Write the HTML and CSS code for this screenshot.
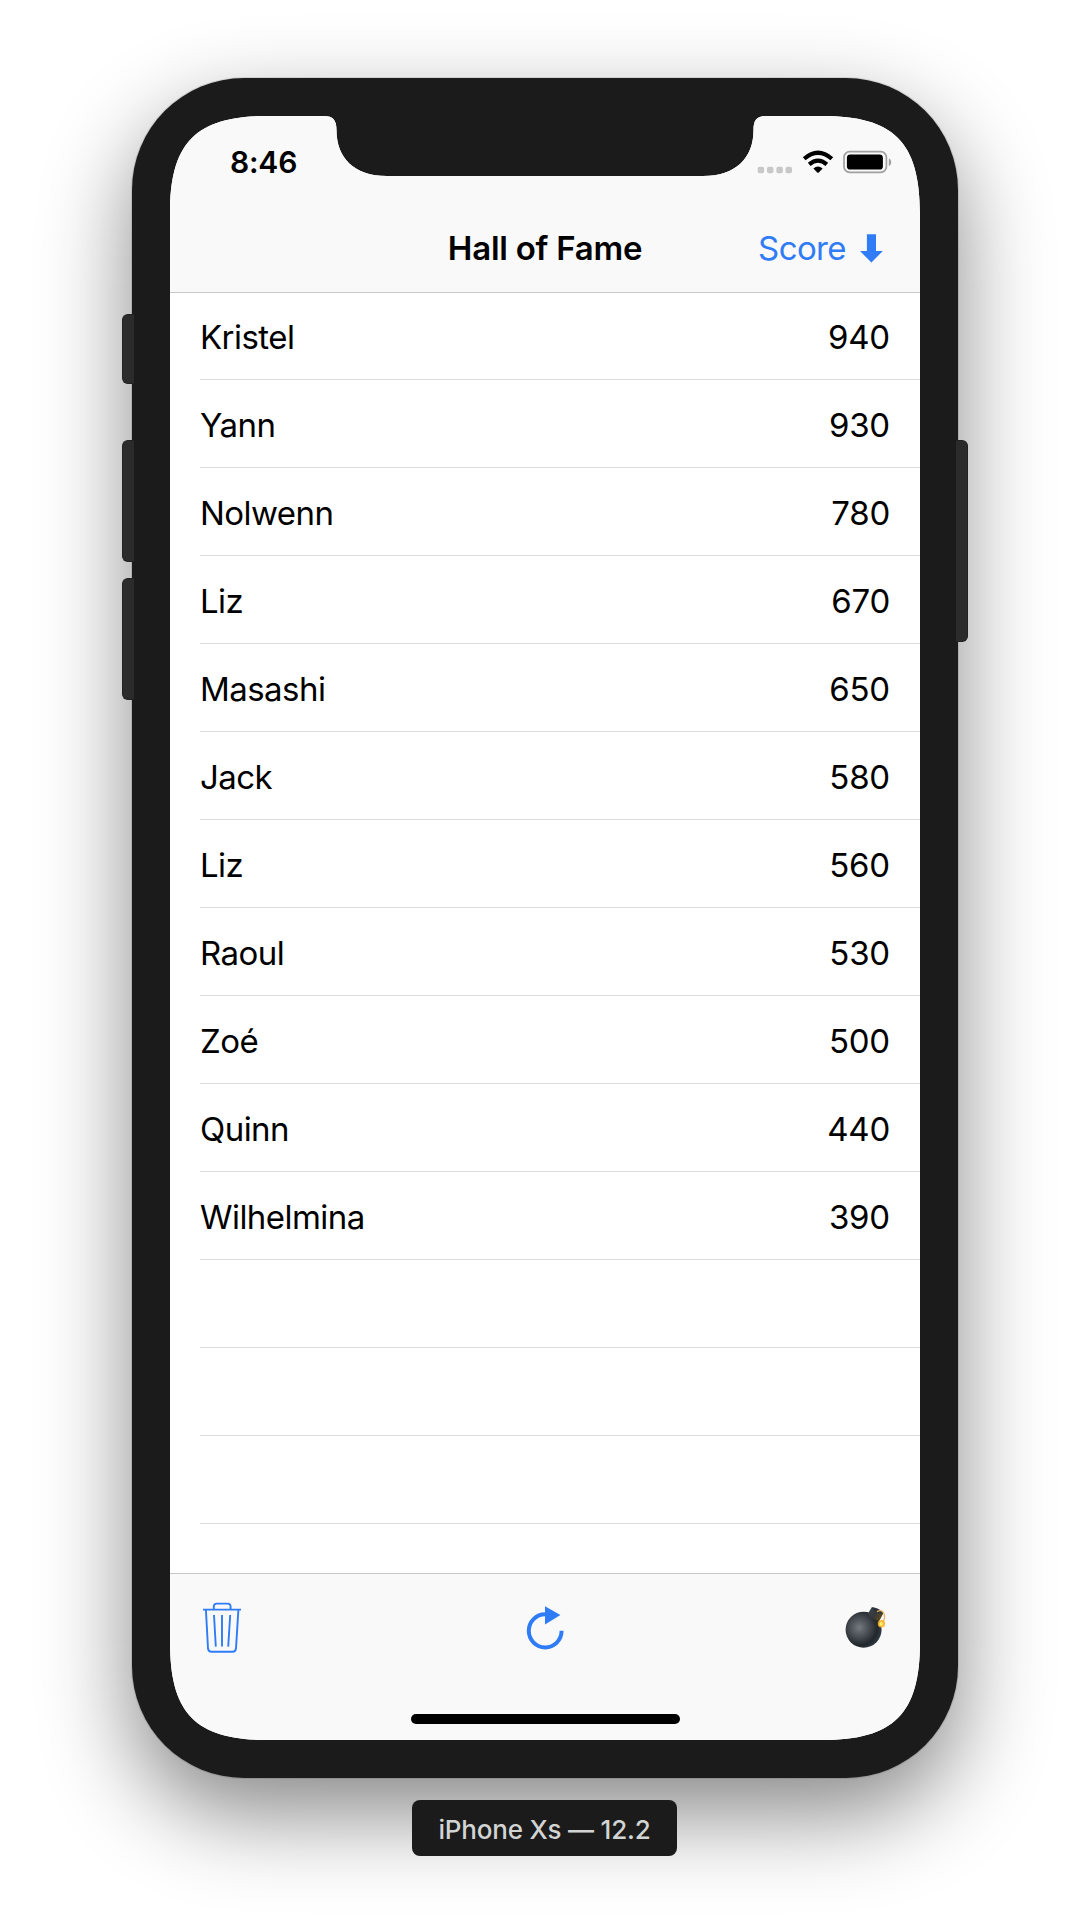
FILE: index.html
```
<!DOCTYPE html>
<html lang="en">
<head>
<meta charset="utf-8">
<title>Hall of Fame</title>
<link rel="stylesheet" href="styles.css">
</head>
<body>
<main class="device">
  <span class="side-button silent"></span>
  <span class="side-button volume-up"></span>
  <span class="side-button volume-down"></span>
  <span class="side-button power"></span>
  <div class="screen">
    <header class="header">
      <div class="status-bar">
        <span class="time">8:46</span>
        <div class="status-icons">
          <svg class="signal" width="36" height="8" viewBox="0 0 36 8" fill="#c8c8c8">
            <rect x="0.7" y="0.7" width="6.4" height="6.6" rx="1.8"/>
            <rect x="10" y="0.7" width="6.4" height="6.6" rx="1.8"/>
            <rect x="19.4" y="0.7" width="6.4" height="6.6" rx="1.8"/>
            <rect x="28.6" y="0.7" width="6.4" height="6.6" rx="1.8"/>
          </svg>
          <svg class="wifi" width="32" height="24" viewBox="0 0 32 24" fill="none" stroke="#000" stroke-width="4.2">
            <path d="M2.2 8.8 Q16 -3.4 29.8 8.8"/>
            <path d="M7.2 14.4 Q16 6.8 24.8 14.4"/>
            <path d="M11.4 18.6 Q16 14.4 20.6 18.6 L16.8 22.4 Q16 23 15.2 22.4 Z" fill="#000" stroke="none"/>
          </svg>
          <svg class="battery" width="49" height="24" viewBox="0 0 49 24">
            <rect x="1" y="1.7" width="42.4" height="20.6" rx="5.6" fill="none" stroke="#a0a0a0" stroke-width="1.7"/>
            <rect x="3.9" y="4.4" width="36" height="15.2" rx="3.4"/>
            <path d="M45.8 8.4 C49 9.6 49 14.8 45.8 16 Z" fill="#a0a0a0"/>
          </svg>
        </div>
      </div>
      <div class="nav-bar">
        <h1 class="title">Hall of Fame</h1>
        <div class="sort"><span class="sort-label">Score</span>
          <svg width="23" height="29" viewBox="0 0 23 29"><path d="M6.9 0.3 H16 V17 H22.8 L11.4 28.6 L0 17 H6.9 Z" fill="#2f7cf6"/></svg>
        </div>
      </div>
    </header>
    <ul class="scores">
      <li class="row"><span>Kristel</span><span class="points">940</span></li>
      <li class="row"><span>Yann</span><span class="points">930</span></li>
      <li class="row"><span>Nolwenn</span><span class="points">780</span></li>
      <li class="row"><span>Liz</span><span class="points">670</span></li>
      <li class="row"><span>Masashi</span><span class="points">650</span></li>
      <li class="row"><span>Jack</span><span class="points">580</span></li>
      <li class="row"><span>Liz</span><span class="points">560</span></li>
      <li class="row"><span>Raoul</span><span class="points">530</span></li>
      <li class="row"><span>Zoé</span><span class="points">500</span></li>
      <li class="row"><span>Quinn</span><span class="points">440</span></li>
      <li class="row"><span>Wilhelmina</span><span class="points">390</span></li>
      <li class="row"></li>
      <li class="row"></li>
      <li class="row"></li>
    </ul>
    <footer class="footer">
      <div class="toolbar">
        <svg width="38" height="52" viewBox="0 0 38 52" fill="none" stroke="#2f7cf6" stroke-width="1.9">
          <path d="M0 7.6 H38 M10.8 7.6 V4.6 Q10.8 1.6 13.8 1.6 H24.6 Q27.6 1.6 27.6 4.6 V7.6"/>
          <path d="M2.9 7.6 L5 46.4 Q5.3 49.8 8.6 49.8 H29.4 Q32.7 49.8 33 46.4 L35.4 7.6"/>
          <path d="M11 13 L12.8 44.6 M19 13 V44.6 M27.2 13 L25.2 44.6"/>
        </svg>
        <svg width="38" height="46" viewBox="-0.4 0 38 46">
          <path d="M18.8 9.2 A16.4 16.6 0 1 0 35.2 25.8" fill="none" stroke="#2f7cf6" stroke-width="4"/>
          <path d="M18.6 1.2 L34 10 L18.6 19.4 Z" fill="#2f7cf6"/>
        </svg>
        <svg width="42" height="46" viewBox="0 0 42 46">
          <defs>
            <radialGradient id="shell" cx="0.38" cy="0.44" r="0.62">
              <stop offset="0" stop-color="#747a7f"/>
              <stop offset="0.4" stop-color="#4b5157"/>
              <stop offset="0.8" stop-color="#22272c"/>
              <stop offset="1" stop-color="#303942"/>
            </radialGradient>
            <linearGradient id="neck" x1="0" y1="0" x2="1" y2="0.6">
              <stop offset="0" stop-color="#39444e"/>
              <stop offset="0.6" stop-color="#37383a"/>
              <stop offset="1" stop-color="#5b4a1e"/>
            </linearGradient>
          </defs>
          <circle cx="18.6" cy="24.7" r="18" fill="url(#shell)"/>
          <path d="M22.6 9.2 L26.6 2.6 Q28 1.4 33 3.8 Q38 6.6 38.1 8.8 L34.4 15.8 Q29 15.6 22.6 9.2 Z" fill="url(#neck)"/>
          <path d="M26.6 2.6 Q32 2.4 38 8.6 Q31 8.4 26.6 2.6 Z" fill="#26313a"/>
          <path d="M32 6.6 Q38.2 3.6 39.4 10.2 Q40.2 14.6 37.2 18" fill="none" stroke="#e4b465" stroke-width="1.3"/>
          <circle cx="36.4" cy="18.8" r="3.7" fill="#ffae21" opacity="0.85"/>
          <circle cx="36" cy="19" r="1.9" fill="#fff06a"/>
        </svg>
      </div>
      <div class="home-indicator"></div>
    </footer>
  </div>
</main>
<div class="device-label">iPhone Xs — 12.2</div>
</body>
</html>
```
FILE: styles.css
```
* { box-sizing: border-box; }

body {
  margin: 0;
  padding-top: 78px;
  height: 1928px;
  display: flex;
  flex-direction: column;
  align-items: center;
  overflow: hidden;
  background: #fff;
  color: #000;
  font-family: Inter, "Liberation Sans", sans-serif;
}

.device {
  position: relative;
  flex: none;
  width: 826px;
  height: 1700px;
  padding: 38px;
  border-radius: 112px;
  background: #1b1b1b;
  box-shadow: 0 0 0 1px rgba(0, 0, 0, 0.1), 0 36px 90px rgba(0, 0, 0, 0.47);
}

.side-button {
  position: absolute;
  left: -10px;
  width: 12px;
  border: 1px solid #222;
  border-right: 0;
  border-radius: 6px 0 0 6px;
  background: #2b2b2b;
}
.silent { top: 236px; height: 70px; }
.volume-up { top: 362px; height: 122px; }
.volume-down { top: 500px; height: 122px; }
.power {
  left: auto;
  right: -10px;
  top: 362px;
  height: 202px;
  border: 1px solid #222;
  border-left: 0;
  border-radius: 0 6px 6px 0;
}

/* Rounded display with the sensor notch cut from its top edge */
.screen {
  display: flex;
  flex-direction: column;
  width: 750px;
  height: 1624px;
  background: #fff;
  clip-path: path("M0 98 C0 26 26 0 98 0 H154 C163 0 166.500 4 166.500 14 C166.500 42 184 60 217 60 H533 C566 60 583.500 42 583.500 14 C583.500 4 587 0 596 0 H652 C724 0 750 26 750 98 V1526 C750 1598 724 1624 652 1624 H98 C26 1624 0 1598 0 1526 Z");
}

.header {
  flex: none;
  height: 177px;
  border-bottom: 1px solid #c8c8c9;
  background: #f9f9f9;
}

.status-bar {
  display: flex;
  justify-content: space-between;
  height: 88px;
  padding: 34px 28px 0 60px;
}
.time {
  font-size: 30px;
  font-weight: 600;
  line-height: 24px;
  letter-spacing: -0.2px;
}
.status-icons { display: flex; align-items: flex-start; }
.signal { margin: 16px 9px 0 0; }
.wifi { margin-right: 9px; }

.nav-bar {
  display: grid;
  grid-template-columns: 1fr auto 1fr;
  align-items: center;
  height: 88px;
}
.title {
  grid-column: 2;
  margin: 0;
  font-size: 33px;
  font-weight: 600;
  line-height: 40px;
  letter-spacing: -0.25px;
}
.sort {
  display: flex;
  justify-content: flex-end;
  align-items: center;
  gap: 14px;
  padding-right: 37px;
  color: #2f7cf6;
  font-size: 33px;
  line-height: 40px;
  letter-spacing: -0.6px;
}

.scores {
  flex: 1;
  margin: 0;
  padding: 0 0 0 30px;
  list-style: none;
}
.row {
  display: flex;
  justify-content: space-between;
  align-items: center;
  height: 88px;
  padding: 3px 30px 0 0;
  border-bottom: 1px solid #dcdcde;
  font-size: 33px;
  line-height: 40px;
  letter-spacing: -0.55px;
}
.row:first-child { height: 87px; padding-top: 2px; }
.points { letter-spacing: -0.2px; }

.footer {
  flex: none;
  height: 167px;
  border-top: 1px solid #c8c8c9;
  background: #f9f9f9;
}
.toolbar {
  display: grid;
  grid-template-columns: 1fr auto 1fr;
  align-items: center;
  height: 108px;
  padding: 0 33px;
}
.toolbar svg:last-child { justify-self: end; }
.home-indicator {
  width: 269px;
  height: 10px;
  margin: 32px auto 0;
  border-radius: 5px;
  background: #000;
}

.device-label {
  flex: none;
  z-index: 1;
  width: 265px;
  height: 56px;
  margin: 22px 1px 0 0;
  border-radius: 8px;
  background: #1b1b1b;
  color: #d2d4d3;
  font-size: 26px;
  font-weight: 500;
  line-height: 59px;
  letter-spacing: -0.2px;
  text-align: center;
}
```
